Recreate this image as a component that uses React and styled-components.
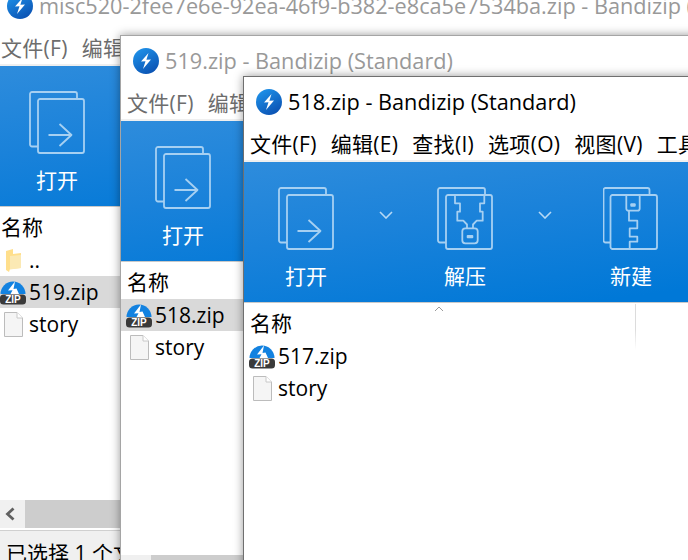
import styled, { createGlobalStyle } from "styled-components";

const GlobalStyle = createGlobalStyle`
  html, body { margin: 0; padding: 0; background: #fff; }
  body { font-family: "Open Sans", "Noto Sans CJK SC", sans-serif; }
`;

const Desktop = styled.div`
  position: relative;
  width: 688px;
  height: 560px;
  overflow: hidden;
`;

const Win = styled.div`
  position: absolute;
  left: ${(p) => p.$x}px;
  top: ${(p) => p.$y}px;
  width: 800px;
  height: 594px;
  box-sizing: border-box;
  display: flex;
  flex-direction: column;
  background: #fff;
  border: 1px solid ${(p) => (p.$active ? "#6f6f6f" : "#a5a5a5")};
  box-shadow: 0 0 9px rgba(0, 0, 0, 0.4);
  color: ${(p) => (p.$active ? "#000" : "#6d6d6d")};
  font-size: 21px;
`;

const TitleBar = styled.div`
  height: 49px;
  flex: none;
  display: flex;
  align-items: center;
  padding-left: 12px;
  gap: 6px;
  font-size: 21.7px;
  color: ${(p) => (p.$active ? "#000" : "#999")};
  white-space: nowrap;
  overflow: hidden;

  svg {
    flex: none;
  }
`;

const MenuBar = styled.div`
  height: 34px;
  flex: none;
  display: flex;
  align-items: center;
  gap: 14px;
  padding-left: 6px;
  letter-spacing: 0.3px;
  border-bottom: 2px solid #efefef;
  white-space: nowrap;
  overflow: hidden;
`;

const Toolbar = styled.div`
  height: 141px;
  flex: none;
  display: flex;
  padding: 25px 0 0 22px;
  box-sizing: border-box;
  background: linear-gradient(172deg, #2e8cdc 0%, #1a82da 35%, #0078d7 75%);
  border-bottom: 1px solid #c9c9c9;
  color: #fff;
`;

const ToolButton = styled.div`
  width: ${(p) => (p.$wide ? 94 : 80)}px;
  flex: none;
  display: flex;
  flex-direction: column;
  align-items: center;
  gap: 12px;
  line-height: 28px;
`;

const ChevronSlot = styled.div`
  width: 79px;
  flex: none;
  display: flex;
  justify-content: center;
  padding-top: 24px;
  height: 12px;
`;

const FileList = styled.div`
  flex: 1;
  min-height: 0;
  color: #000;
`;

const ListHeader = styled.div`
  height: 37px;
  display: flex;
  align-items: center;
`;

const NameColumn = styled.div`
  position: relative;
  width: 392px;
  height: 100%;
  display: flex;
  align-items: center;
  padding-left: 6px;
  box-sizing: border-box;

  &::after {
    content: "";
    position: absolute;
    right: 0;
    top: 1px;
    width: 1px;
    height: 46px;
    background: linear-gradient(#dcdcdc 55%, rgba(220, 220, 220, 0));
  }
`;

const SortCaret = styled.svg`
  position: absolute;
  left: 190px;
  top: 3px;
`;

const Row = styled.div`
  height: 32px;
  display: flex;
  align-items: center;
  gap: 3px;
  padding-left: 5px;
  background: ${(p) => (p.$selected ? "#d9d9d9" : "transparent")};
`;

const RowIcon = styled.div`
  width: 26px;
  height: 26px;
  flex: none;
  display: flex;
  align-items: center;
  justify-content: center;
`;

const ScrollTrack = styled.div`
  height: 28px;
  flex: none;
  display: flex;
  background: #cdcdcd;
`;

const ScrollButton = styled.div`
  width: ${(p) => p.$w}px;
  flex: none;
  display: flex;
  align-items: center;
  justify-content: center;
  background: #f0f0f0;
`;

const StatusBar = styled.div`
  height: 42px;
  flex: none;
  display: flex;
  align-items: center;
  padding-left: 11px;
  margin-top: 2px;
  border-top: 1px solid #d0d0d0;
  background: #f0f0f0;
  color: #000;
  white-space: nowrap;
`;

const iconStroke = {
  fill: "none",
  stroke: "#a6d0f2",
  strokeWidth: 1.8,
  strokeLinejoin: "round",
};

const Logo = () => (
  <svg width="26" height="26" viewBox="0 0 26 26">
    <defs>
      <linearGradient id="logoFill" x1="0.2" y1="0" x2="0.8" y2="1">
        <stop offset="0" stopColor="#1f93ea" />
        <stop offset="1" stopColor="#0a4fb0" />
      </linearGradient>
    </defs>
    <circle cx="13" cy="13" r="13" fill="url(#logoFill)" />
    <path d="M15.5 5 L8 13.5 L12.5 13.3 L10 21 L18 11.6 L13.4 11.8 Z" fill="#fff" />
  </svg>
);

const OpenIcon = () => (
  <svg width="56" height="63" viewBox="0 0 56 63">
    <path d="M9 55.5H3a2 2 0 0 1-2-2V3a2 2 0 0 1 2-2h43a2 2 0 0 1 2 2v5" {...iconStroke} />
    <rect x="9" y="8" width="46" height="54" rx="2" {...iconStroke} />
    <path d="M19.5 44H42.5M30.5 33L42.5 44L30.5 55" {...iconStroke} />
  </svg>
);

const ExtractIcon = () => (
  <svg width="56" height="63" viewBox="0 0 56 63">
    <path d="M9 55.5H3a2 2 0 0 1-2-2V3a2 2 0 0 1 2-2h43a2 2 0 0 1 2 2v5" {...iconStroke} />
    <rect x="9" y="8" width="46" height="54" rx="2" {...iconStroke} />
    <path d="M18 8V16.3H23V24.7H20.3V33.7H26.3L30 37.5V41.3M47.3 8V16.3H43V24.7H45.7V33.7H39.7L36 37.5V41.3" {...iconStroke} />
    <rect x="25.3" y="41.3" width="15.4" height="15" rx="3" {...iconStroke} />
    <rect x="29.7" y="48" width="6.6" height="3.3" rx="1" fill="#a6d0f2" />
  </svg>
);

const NewIcon = () => (
  <svg width="56" height="63" viewBox="0 0 56 63">
    <path d="M7 55.5H2.5a2 2 0 0 1-2-2V3a2 2 0 0 1 2-2h42a2 2 0 0 1 2 2v5" {...iconStroke} />
    <rect x="7.5" y="8" width="46.5" height="54" rx="2" {...iconStroke} />
    <path d="M23.3 8V21.5a2.2 2.2 0 0 0 2.2 2.2H34.5a2.2 2.2 0 0 0 2.2-2.2V8" {...iconStroke} />
    <rect x="27.3" y="16.3" width="5.4" height="3.4" rx="1" fill="#a6d0f2" />
    <path d="M26 23.7V33.7H34.3V41.3H26.7V49.7H34.3V54.7H26.7V62" {...iconStroke} />
  </svg>
);

const Chevron = () => (
  <svg width="14" height="8" viewBox="0 0 14 8">
    <path d="M1 1L7 7L13 1" fill="none" stroke="#b6d9f5" strokeWidth="1.6" />
  </svg>
);

const ZipIcon = () => (
  <svg width="26" height="26" viewBox="0 0 26 26">
    <path d="M0.5 15a12.5 12.5 0 0 1 25 0Z" fill="#1382e0" />
    <path d="M15 2.5L8 11.5L12.5 11.2L10.5 15H19L16.5 9.5L13.5 10Z" fill="#fff" />
    <rect x="0" y="15.5" width="26" height="10" rx="3.5" fill="#3a3a3a" />
    <text x="13" y="24" textAnchor="middle" fontSize="10" fontWeight="700" fontFamily="'Liberation Sans', sans-serif" fill="#fff">ZIP</text>
  </svg>
);

const PlainFileIcon = () => (
  <svg width="19" height="25" viewBox="0 0 19 25">
    <path d="M0.5 0.5H13L18.5 6V24.5H0.5Z" fill="#f5f5f5" stroke="#bcbcbc" />
    <path d="M13 0.5V6H18.5" fill="#fff" stroke="#c8c8c8" />
  </svg>
);

const FolderIcon = () => (
  <svg width="17" height="24" viewBox="0 0 17 24">
    <path d="M1 3L8 1V6L16 5V20L5 21L4 24L1 22Z" fill="#ffdf8c" />
    <path d="M5 8L16 7V20L5 21.5Z" fill="#fbe9b4" />
  </svg>
);

const BackArrow = () => (
  <svg width="12" height="14" viewBox="0 0 12 14">
    <path d="M9.5 1.5L3.5 7L9.5 12.5" fill="none" stroke="#606060" strokeWidth="2.8" />
  </svg>
);

const ROW_ICONS = { zip: ZipIcon, file: PlainFileIcon, folder: FolderIcon };

const MENU_ITEMS = ["文件(F)", "编辑(E)", "查找(I)", "选项(O)", "视图(V)", "工具(T)"];

const WINDOWS = [
  {
    x: -6,
    y: -20,
    title: "misc520-2fee7e6e-92ea-46f9-b382-e8ca5e7534ba.zip - Bandizip (Standard)",
    rows: [
      { icon: "folder", name: ".." },
      { icon: "zip", name: "519.zip", selected: true },
      { icon: "file", name: "story" },
    ],
    scrollButton: 30,
    status: "已选择 1 个文件",
  },
  {
    x: 120,
    y: 35,
    title: "519.zip - Bandizip (Standard)",
    rows: [
      { icon: "zip", name: "518.zip", selected: true },
      { icon: "file", name: "story" },
    ],
    scrollButton: 30,
    status: "已选择 1 个文件",
  },
  {
    x: 243,
    y: 76,
    active: true,
    title: "518.zip - Bandizip (Standard)",
    rows: [
      { icon: "zip", name: "517.zip" },
      { icon: "file", name: "story" },
    ],
    scrollButton: 30,
    status: "",
  },
];

const BandizipWindow = ({ win }) => (
  <Win $x={win.x} $y={win.y} $active={win.active}>
    <TitleBar $active={win.active}>
      <Logo />
      <span>{win.title}</span>
    </TitleBar>
    <MenuBar>
      {MENU_ITEMS.map((item) => (
        <span key={item}>{item}</span>
      ))}
    </MenuBar>
    <Toolbar>
      <ToolButton>
        <OpenIcon />
        打开
      </ToolButton>
      <ChevronSlot>
        <Chevron />
      </ChevronSlot>
      <ToolButton>
        <ExtractIcon />
        解压
      </ToolButton>
      <ChevronSlot>
        <Chevron />
      </ChevronSlot>
      <ToolButton $wide>
        <NewIcon />
        新建
      </ToolButton>
    </Toolbar>
    <FileList>
      <ListHeader>
        <NameColumn>
          名称
          <SortCaret width="10" height="6" viewBox="0 0 10 6">
            <path d="M1 5L5 1L9 5" fill="none" stroke="#9a9a9a" />
          </SortCaret>
        </NameColumn>
      </ListHeader>
      {win.rows.map((row) => {
        const Icon = ROW_ICONS[row.icon];
        return (
          <Row key={row.name} $selected={row.selected}>
            <RowIcon>
              <Icon />
            </RowIcon>
            {row.name}
          </Row>
        );
      })}
    </FileList>
    <ScrollTrack>
      <ScrollButton $w={win.scrollButton}>
        <BackArrow />
      </ScrollButton>
    </ScrollTrack>
    <StatusBar>{win.status}</StatusBar>
  </Win>
);

export default function App() {
  return (
    <Desktop>
      <GlobalStyle />
      {WINDOWS.map((win) => (
        <BandizipWindow key={win.x} win={win} />
      ))}
    </Desktop>
  );
}
